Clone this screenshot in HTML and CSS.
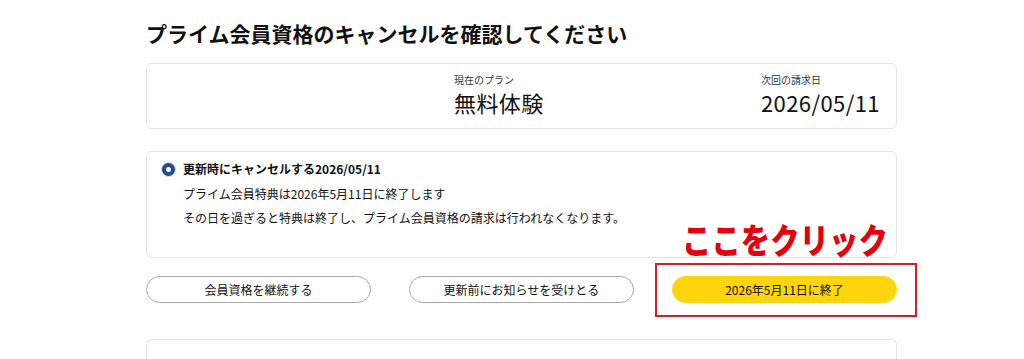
FILE: index.html
```html
<!DOCTYPE html>
<html lang="ja">
<head>
<meta charset="utf-8">
<link rel="stylesheet" href="styles.css">
</head>
<body>
<div class="page">
  <h1 class="title">プライム会員資格のキャンセルを確認してください</h1>
  <div class="card plan">
    <div class="col-empty"></div>
    <div class="col">
      <div class="label">現在のプラン</div>
      <div class="value">無料体験</div>
    </div>
    <div class="col">
      <div class="label">次回の請求日</div>
      <div class="value">2026/05/11</div>
    </div>
  </div>
  <div class="card option">
    <div class="option-head">
      <span class="radio"></span>
      <span class="option-title">更新時にキャンセルする2026/05/11</span>
    </div>
    <p class="option-text">プライム会員特典は2026年5月11日に終了します</p>
    <p class="option-text">その日を過ぎると特典は終了し、プライム会員資格の請求は行われなくなります。</p>
  </div>
  <div class="note">ここをクリック</div>
  <div class="buttons">
    <button class="btn">会員資格を継続する</button>
    <button class="btn">更新前にお知らせを受けとる</button>
    <button class="btn btn-primary">2026年5月11日に終了</button>
    <div class="highlight"></div>
  </div>
  <div class="card bottom"></div>
</div>
</body>
</html>
```
FILE: styles.css
```css
html, body {
  margin: 0;
  padding: 0;
  background: #ffffff;
}
body {
  font-family: "Noto Sans CJK JP", "Noto Sans", sans-serif;
  color: #0f1111;
  overflow: hidden;
}
.page {
  position: relative;
  width: 751px;
  margin-left: 146px;
  padding-top: 18px;
}
.title {
  margin: 0;
  font-size: 21px;
  line-height: 30px;
  font-weight: 700;
  color: #111111;
}
.card {
  border: 1px solid #e3e5e5;
  border-radius: 6px;
  background: #fff;
  box-sizing: border-box;
}
.plan {
  margin-top: 15px;
  height: 66px;
  display: grid;
  grid-template-columns: 307px 307px 1fr;
  padding-top: 9px;
}
.label {
  font-size: 10px;
  line-height: 14px;
  color: #333;
}
.value {
  margin-top: 2px;
  font-size: 22px;
  line-height: 27px;
  color: #111;
  letter-spacing: 0.4px;
}
.option {
  margin-top: 22px;
  height: 107px;
  padding: 7px 15px 0;
}
.option-head {
  display: flex;
  align-items: center;
  gap: 8px;
  height: 20px;
}
.radio {
  width: 13px;
  height: 13px;
  box-sizing: border-box;
  border-radius: 50%;
  border: 4px solid #1f4e8a;
  background: #fff;
  box-shadow: 0 0 0 1px #c9d6e6;
}
.option-title {
  font-size: 12px;
  font-weight: 700;
  line-height: 20px;
}
.option-text {
  margin: 0;
  padding-left: 21px;
  font-size: 12px;
  line-height: 24px;
}
.option-head + .option-text {
  margin-top: 3px;
}
.note {
  position: absolute;
  left: 536px;
  top: 220px;
  font-size: 35px;
  line-height: 38px;
  font-weight: 900;
  color: #e3000f;
  transform: scaleX(0.84);
  transform-origin: left top;
  white-space: nowrap;
}
.buttons {
  position: relative;
  margin-top: 18px;
  display: grid;
  grid-template-columns: repeat(3, 1fr);
  gap: 38px;
}
.btn {
  height: 27px;
  border: 1px solid #a9a9a9;
  border-radius: 14px;
  background: #fff;
  font-family: "Noto Sans CJK JP", "Noto Sans", sans-serif;
  font-size: 12px;
  color: #111;
  padding: 0;
}
.btn-primary {
  background: #fcd50f;
  border-color: #fcd50f;
}
.highlight {
  position: absolute;
  left: 509px;
  top: -13px;
  width: 262px;
  height: 54px;
  box-sizing: border-box;
  border: 2px solid #d0202c;
}
.bottom {
  margin-top: 36px;
  height: 20px;
  border-bottom: 0;
  border-bottom-left-radius: 0;
  border-bottom-right-radius: 0;
}
```
